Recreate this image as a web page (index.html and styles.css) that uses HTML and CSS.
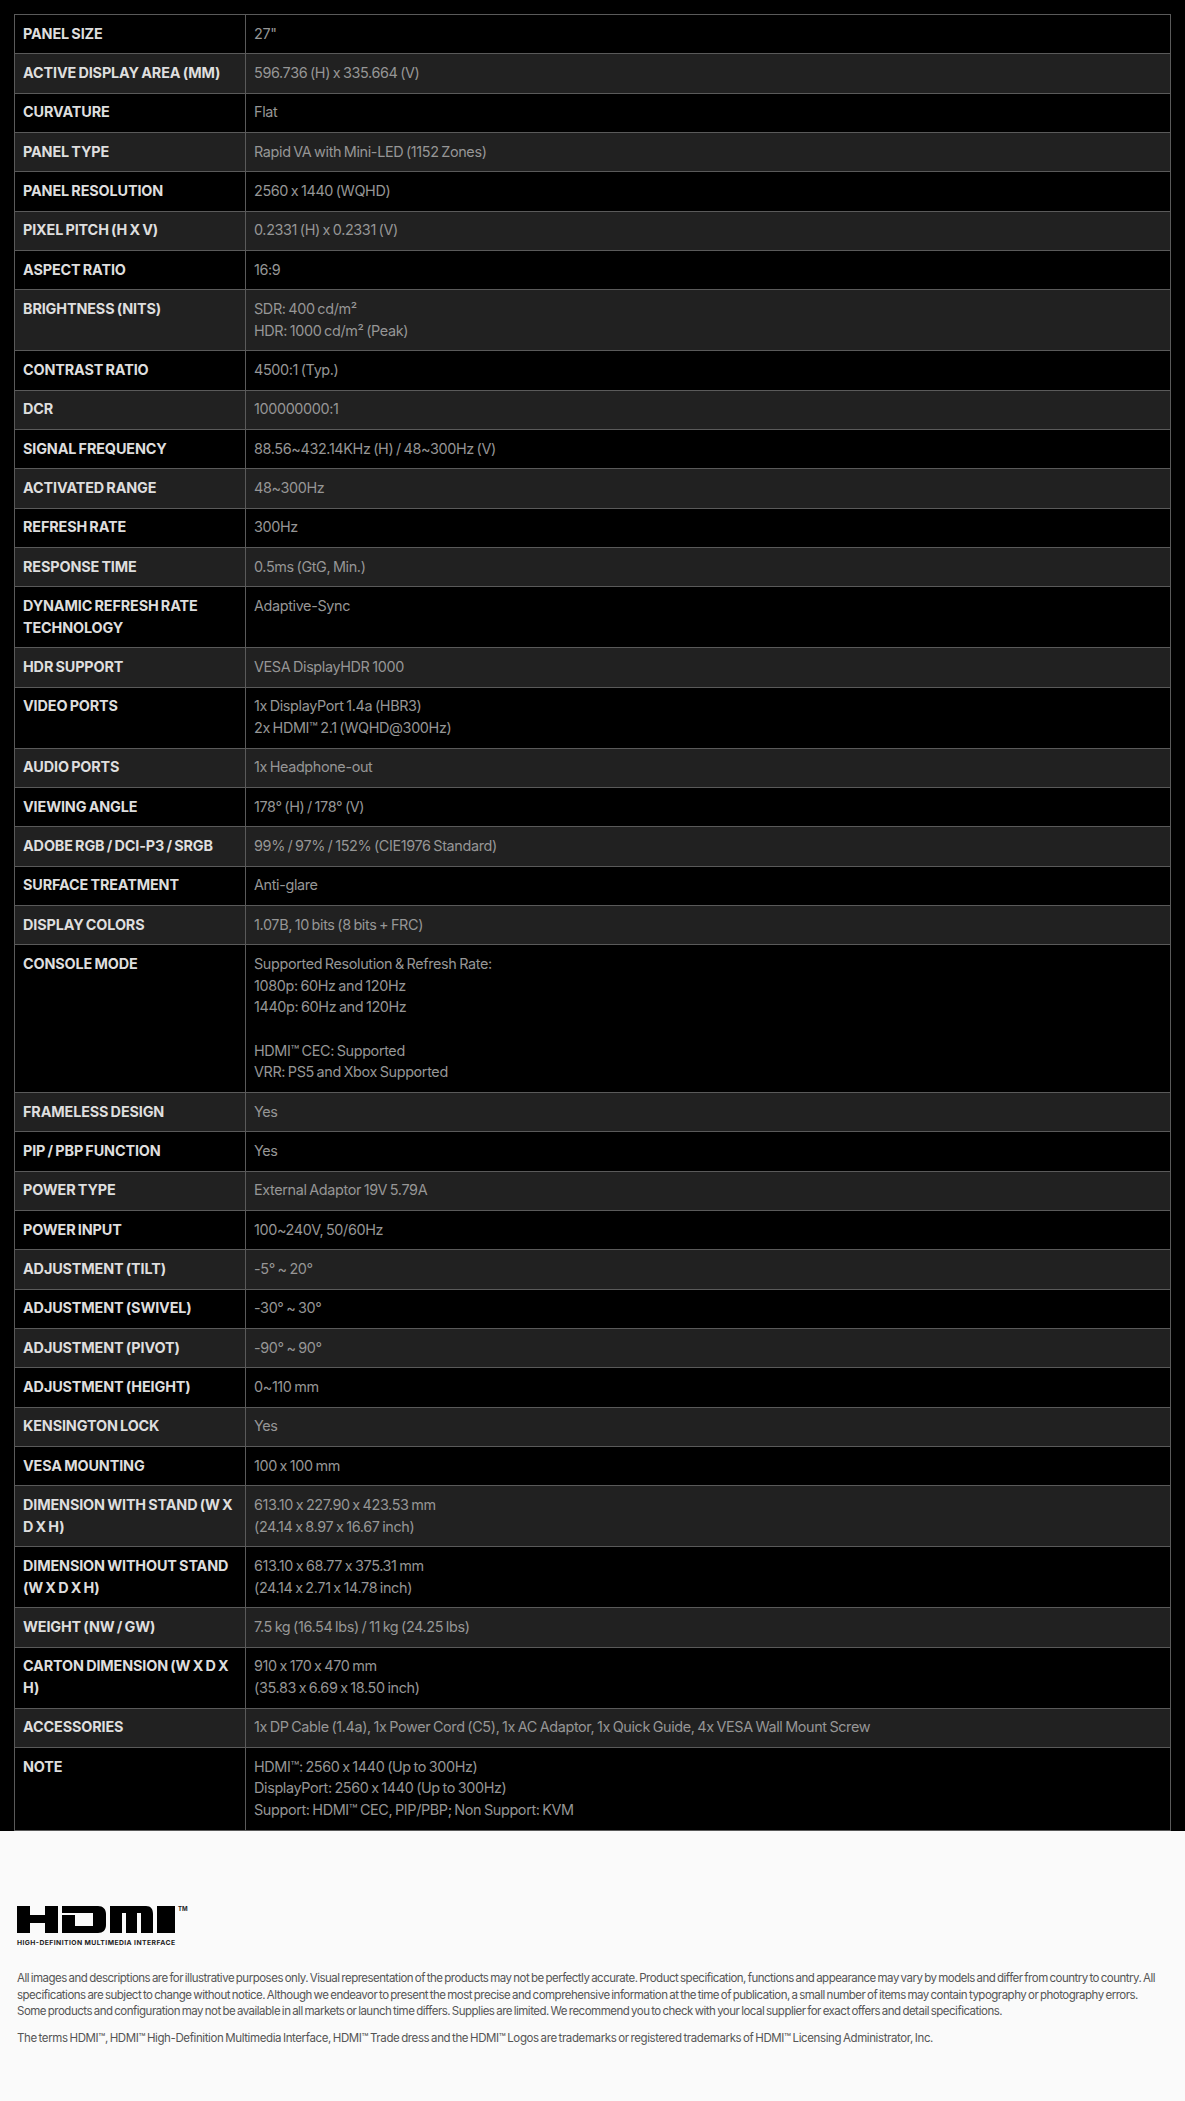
FILE: index.html
```html
<!DOCTYPE html>
<html lang="en">
<head>
<meta charset="utf-8">
<title>Specifications</title>
<link rel="stylesheet" href="styles.css">
</head>
<body>
<section class="specs">
<table class="spec-table">
<tbody>
<tr><th>PANEL SIZE</th><td>27"</td></tr>
<tr><th>ACTIVE DISPLAY AREA (MM)</th><td>596.736 (H) x 335.664 (V)</td></tr>
<tr><th>CURVATURE</th><td>Flat</td></tr>
<tr><th>PANEL TYPE</th><td>Rapid VA with Mini-LED (1152 Zones)</td></tr>
<tr><th>PANEL RESOLUTION</th><td>2560 x 1440 (WQHD)</td></tr>
<tr><th>PIXEL PITCH (H X V)</th><td>0.2331 (H) x 0.2331 (V)</td></tr>
<tr><th>ASPECT RATIO</th><td>16:9</td></tr>
<tr><th>BRIGHTNESS (NITS)</th><td>SDR: 400 cd/m²<br>HDR: 1000 cd/m² (Peak)</td></tr>
<tr><th>CONTRAST RATIO</th><td>4500:1 (Typ.)</td></tr>
<tr><th>DCR</th><td>100000000:1</td></tr>
<tr><th>SIGNAL FREQUENCY</th><td>88.56~432.14KHz (H) / 48~300Hz (V)</td></tr>
<tr><th>ACTIVATED RANGE</th><td>48~300Hz</td></tr>
<tr><th>REFRESH RATE</th><td>300Hz</td></tr>
<tr><th>RESPONSE TIME</th><td>0.5ms (GtG, Min.)</td></tr>
<tr><th>DYNAMIC REFRESH RATE TECHNOLOGY</th><td>Adaptive-Sync</td></tr>
<tr><th>HDR SUPPORT</th><td>VESA DisplayHDR 1000</td></tr>
<tr><th>VIDEO PORTS</th><td>1x DisplayPort 1.4a (HBR3)<br>2x HDMI™ 2.1 (WQHD@300Hz)</td></tr>
<tr><th>AUDIO PORTS</th><td>1x Headphone-out</td></tr>
<tr><th>VIEWING ANGLE</th><td>178° (H) / 178° (V)</td></tr>
<tr><th>ADOBE RGB / DCI-P3 / SRGB</th><td>99% / 97% / 152% (CIE1976 Standard)</td></tr>
<tr><th>SURFACE TREATMENT</th><td>Anti-glare</td></tr>
<tr><th>DISPLAY COLORS</th><td>1.07B, 10 bits (8 bits + FRC)</td></tr>
<tr><th>CONSOLE MODE</th><td>Supported Resolution &amp; Refresh Rate:<br>1080p: 60Hz and 120Hz<br>1440p: 60Hz and 120Hz<br><br>HDMI™ CEC: Supported<br>VRR: PS5 and Xbox Supported</td></tr>
<tr><th>FRAMELESS DESIGN</th><td>Yes</td></tr>
<tr><th>PIP / PBP FUNCTION</th><td>Yes</td></tr>
<tr><th>POWER TYPE</th><td>External Adaptor 19V 5.79A</td></tr>
<tr><th>POWER INPUT</th><td>100~240V, 50/60Hz</td></tr>
<tr><th>ADJUSTMENT (TILT)</th><td>-5° ~ 20°</td></tr>
<tr><th>ADJUSTMENT (SWIVEL)</th><td>-30° ~ 30°</td></tr>
<tr><th>ADJUSTMENT (PIVOT)</th><td>-90° ~ 90°</td></tr>
<tr><th>ADJUSTMENT (HEIGHT)</th><td>0~110 mm</td></tr>
<tr><th>KENSINGTON LOCK</th><td>Yes</td></tr>
<tr><th>VESA MOUNTING</th><td>100 x 100 mm</td></tr>
<tr><th>DIMENSION WITH STAND (W X D X H)</th><td>613.10 x 227.90 x 423.53 mm<br>(24.14 x 8.97 x 16.67 inch)</td></tr>
<tr><th>DIMENSION WITHOUT STAND (W X D X H)</th><td>613.10 x 68.77 x 375.31 mm<br>(24.14 x 2.71 x 14.78 inch)</td></tr>
<tr><th>WEIGHT (NW / GW)</th><td>7.5 kg (16.54 lbs) / 11 kg (24.25 lbs)</td></tr>
<tr><th>CARTON DIMENSION (W X D X H)</th><td>910 x 170 x 470 mm<br>(35.83 x 6.69 x 18.50 inch)</td></tr>
<tr><th>ACCESSORIES</th><td>1x DP Cable (1.4a), 1x Power Cord (C5), 1x AC Adaptor, 1x Quick Guide, 4x VESA Wall Mount Screw</td></tr>
<tr><th>NOTE</th><td>HDMI™: 2560 x 1440 (Up to 300Hz)<br>DisplayPort: 2560 x 1440 (Up to 300Hz)<br>Support: HDMI™ CEC, PIP/PBP; Non Support: KVM</td></tr>
</tbody>
</table>
</section>
<footer class="legal">
<div class="hdmi-logo">
<svg class="hdmi-mark" viewBox="0 0 158 27" width="158" height="27" aria-hidden="true">
<path d="M0 0H13V9H28V0H41V27H28V17H13V27H0Z"/>
<path d="M45 0H81C86 0 89 3 89 8V19C89 24 86 27 81 27H45V9H58V20H76V7H45Z"/>
<path d="M93 0H129C134 0 136 3 136 8V27H124V7H120V27H109V7H105V27H93Z"/>
<path d="M140 0H158V27H140Z"/>
</svg>
<span class="hdmi-tm">TM</span>
<p class="hdmi-tagline">HIGH-DEFINITION MULTIMEDIA INTERFACE</p>
</div>
<p class="legal-text">All images and descriptions are for illustrative purposes only. Visual representation of the products may not be perfectly accurate. Product specification, functions and appearance may vary by models and differ from country to country. All specifications are subject to change without notice. Although we endeavor to present the most precise and comprehensive information at the time of publication, a small number of items may contain typography or photography errors. Some products and configuration may not be available in all markets or launch time differs. Supplies are limited. We recommend you to check with your local supplier for exact offers and detail specifications.</p>
<p class="legal-text legal-terms">The terms HDMI™, HDMI™ High-Definition Multimedia Interface, HDMI™ Trade dress and the HDMI™ Logos are trademarks or registered trademarks of HDMI™ Licensing Administrator, Inc.</p>
</footer>
</body>
</html>
```

FILE: styles.css
```css
* { box-sizing: border-box; }
html, body { margin: 0; padding: 0; }
body { background: #fafafa; font-family: Inter, Roboto, "Liberation Sans", sans-serif; }
.specs { background: #000; padding: 14px 14px 0; height: 1831px; }
.spec-table { width: 100%; border-collapse: collapse; table-layout: fixed; border: 1px solid #5a5a5a; font-size: 14.4px; line-height: 21.67px; word-spacing: -1px; }
.spec-table tr:nth-child(even) { background: #212121; }
.spec-table th, .spec-table td { border: 1px solid #5a5a5a; padding: 7.8px 8px 8.86px; text-align: left; vertical-align: top; }
.spec-table th { width: 231px; color: #dedede; font-weight: 700; letter-spacing: -.13px; }
.spec-table td { color: #969696; font-weight: 400; letter-spacing: -.36px; }
.legal { padding: 75px 20px 0 17px; height: 270px; color: #555; }
.hdmi-logo { position: relative; width: 175px; height: 44px; }
.hdmi-mark { display: block; fill: #000; }
.hdmi-tm { position: absolute; left: 161px; top: -1px; font-size: 6px; font-weight: 700; color: #222; }
.hdmi-tagline { margin: 6px 0 0; width: 158px; font-size: 6.8px; line-height: 8px; font-weight: 700; color: #222; letter-spacing: .42px; white-space: nowrap; }
.legal-text { margin: 20px 0 0; font-size: 11.5px; line-height: 16.5px; letter-spacing: -.5px; word-spacing: -1px; }
.legal-text.legal-terms { margin-top: 10px; letter-spacing: -.39px; }
```
